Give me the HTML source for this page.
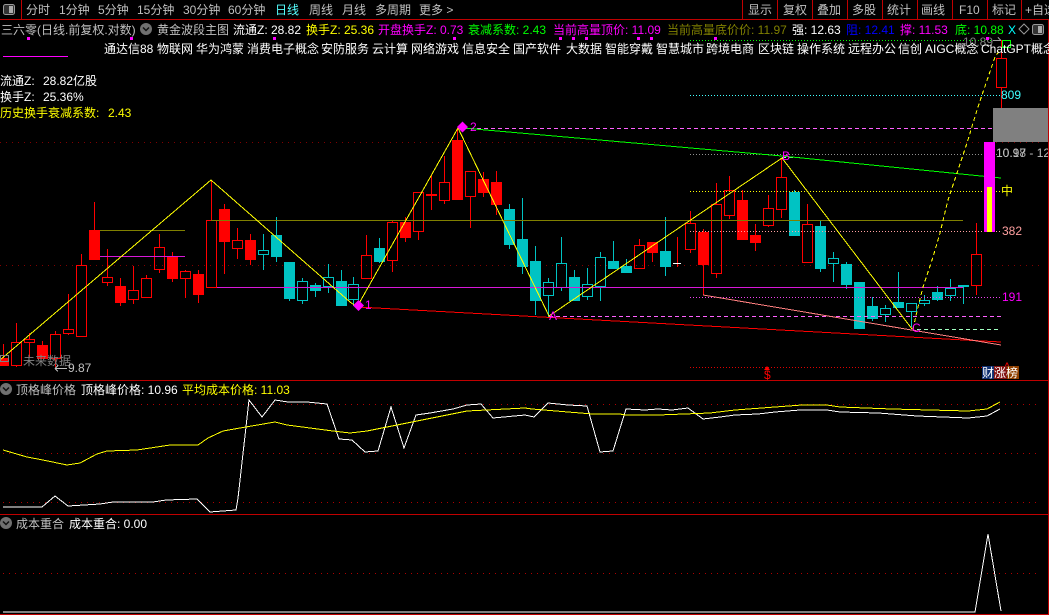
<!DOCTYPE html>
<html><head><meta charset="utf-8"><style>
html,body{margin:0;padding:0;background:#000;width:1049px;height:615px;overflow:hidden}
svg{display:block;position:absolute;left:0;top:0}
text{font-family:"Liberation Sans","WenQuanYi Zen Hei","Noto Sans CJK SC",sans-serif;font-size:12px;white-space:pre}
.g{fill:#c0c0c0}.w{fill:#fff}.y{fill:#ff0}.m{fill:#f0f}.l{fill:#0f0}.o{fill:#808000}.b{fill:#00f}.c{fill:#5ff}
.ln{shape-rendering:crispEdges;fill:none}
</style></head><body>
<svg width="1049" height="615" viewBox="0 0 1049 615">
<!-- grid -->
<g class="ln" stroke="#800000" stroke-dasharray="1 5">
<path d="M0 142.500H1040M0 265.500H1040"/>
<path d="M3 404.500H1040M3 453.500H1040M3 502.500H1040M3 573.500H1040" stroke="#b00000"/>
</g>
<!-- red wicks and hollow bodies -->
<path class="ln" stroke="#f00" d="M3.500 344V358M16.500 323V342M16.500 366V367M29.500 333V339M29.500 343V357M42.500 341V345M55.500 331V334M55.500 359V367M68.500 294V329M68.500 334V335M81.500 254V265M94.500 202V230M107.500 249V277M107.500 283V286M120.500 278V286M120.500 303V306M133.500 266V290M133.500 300V304M146.500 275V278M159.500 234V247M159.500 269V273M172.500 252V257M172.500 279V282M185.500 270V271M185.500 279V298M198.500 270V274M198.500 295V303M211.500 180V220M224.500 204V209M224.500 242V274M237.500 228V240M237.500 249V259M250.500 234V240M250.500 260V265M366.500 235V255M392.500 220V222M392.500 261V272M405.500 217V222M405.500 238V242M418.500 232V240M431.500 175V210M444.500 156V182M444.500 201V204M457.500 128V140M470.500 197V228M483.500 172V179M483.500 193V197M496.500 171V182M496.500 205V215M639.500 239V245M652.500 253V262M677.500 237V267M690.500 211V223M690.500 250V253M703.500 229V232M703.500 265V295M716.500 183V204M716.500 274V278M729.500 176V190M729.500 216V219M742.500 190V200M755.500 224V235M755.500 243V251M768.500 195V208M768.500 226V227M781.500 158V177M781.500 209V218M807.500 204V224M976.500 223V254M976.500 286V295M1001.500 40V58M1001.500 88V108
M11.500 342.500h10v23h-10zM24.500 339.500h10v3h-10zM50.500 334.500h10v24h-10zM63.500 329.500h10v4h-10zM76.500 265.500h10v71h-10zM102.500 277.500h10v5h-10zM128.500 290.500h10v9h-10zM141.500 278.500h10v19h-10zM154.500 247.500h10v22h-10zM180.500 271.500h10v7h-10zM206.500 220.500h10v67h-10zM232.500 240.500h10v8h-10zM361.500 255.500h10v23h-10zM387.500 222.500h10v38h-10zM413.500 192.500h10v39h-10zM439.500 182.500h10v18h-10zM465.500 171.500h10v25h-10zM634.500 245.500h10v23h-10zM685.500 223.500h10v26h-10zM711.500 204.500h10v69h-10zM724.500 190.500h10v25h-10zM763.500 208.500h10v17h-10zM776.500 177.500h10v32h-10zM802.500 224.500h10v38h-10zM971.500 254.500h10v31h-10zM996.500 58.500h10v29h-10z"/>
<!-- red filled -->
<path class="ln" style="fill:#f00" d="M-2 358h11v8h-11zM37 345h11v14h-11zM89 230h11v30h-11zM115 286h11v17h-11zM167 257h11v22h-11zM193 274h11v21h-11zM219 209h11v33h-11zM245 240h11v20h-11zM400 222h11v16h-11zM426 194h11v2h-11zM452 140h11v60h-11zM478 179h11v14h-11zM491 182h11v23h-11zM647 242h11v11h-11zM698 232h11v33h-11zM737 200h11v40h-11zM750 235h11v8h-11z"/>
<!-- cyan wicks and hollow bodies -->
<path class="ln" stroke="#00c3c3" d="M263.500 234V250M263.500 255V270M276.500 217V235M276.500 257V262M289.500 299V301M302.500 278V281M302.500 301V304M315.500 283V285M315.500 291V297M328.500 264V277M328.500 287V293M341.500 270V281M353.500 277V284M353.500 300V306M379.500 238V248M379.500 262V263M509.500 204V209M509.500 245V249M522.500 198V239M522.500 267V274M535.500 246V261M535.500 301V315M548.500 278V282M548.500 296V317M561.500 237V263M561.500 288V291M574.500 270V277M587.500 268V284M587.500 297V300M600.500 252V257M600.500 287V301M613.500 241V261M626.500 259V266M665.500 217V251M665.500 267V276M794.500 190V192M820.500 220V226M820.500 269V272M833.500 252V258M833.500 264V282M846.500 262V264M846.500 285V289M872.500 297V306M872.500 319V321M885.500 305V308M885.500 315V322M898.500 272V302M911.500 312V327M924.500 295V300M924.500 304V306M937.500 286V292M937.500 300V301M950.500 279V288M950.500 296V301M963.500 287V304
M258.500 250.500h10v4h-10zM297.500 281.500h10v19h-10zM323.500 277.500h10v9h-10zM348.500 284.500h10v15h-10zM543.500 282.500h10v13h-10zM556.500 263.500h10v24h-10zM582.500 284.500h10v12h-10zM595.500 257.500h10v29h-10zM828.500 258.500h10v5h-10zM880.500 308.500h10v6h-10zM906.500 303.500h10v8h-10zM919.500 300.500h10v3h-10zM945.500 288.500h10v7h-10z"/>
<!-- cyan filled -->
<path class="ln" style="fill:#00c3c3" d="M271 235h11v22h-11zM284 262h11v37h-11zM310 285h11v6h-11zM336 281h11v25h-11zM374 248h11v14h-11zM504 209h11v36h-11zM517 239h11v28h-11zM530 261h11v40h-11zM569 277h11v24h-11zM608 261h11v8h-11zM621 266h11v7h-11zM660 251h11v16h-11zM789 192h11v44h-11zM815 226h11v43h-11zM841 264h11v21h-11zM854 282h11v47h-11zM867 306h11v13h-11zM893 302h11v6h-11zM932 292h11v8h-11zM958 285h11v2h-11z"/>
<path class="ln" stroke="#fff" d="M673 263.500h8"/>
<!-- horizontal level lines -->
<path class="ln" stroke="#808000" d="M211 220.500H963M100 230.500H185"/>
<path class="ln" stroke="#d818d8" d="M217 287.500H963M100 256.500H185"/>
<g class="ln" stroke-dasharray="1 2">
<path stroke="#0f0" d="M690 40.500H1000"/>
<path stroke="#40ffff" d="M690 95.500H1001"/>
<path stroke="#909090" d="M690 154.500H1001"/>
<path stroke="#ff0" d="M690 191.500H1001"/>
<path stroke="#ffa0a0" d="M690 231.500H1001"/>
<path stroke="#f040f0" d="M690 297.500H1001"/>
<path stroke="#e00000" d="M690 367.500H1001"/>
</g>
<g class="ln" stroke-dasharray="4 3">
<path stroke="#ff60ff" d="M470 128.500H1000M549 316.500H1001"/>
<path stroke="#a0ffc0" d="M782 157.500H802M917 329.500H1001"/>
</g>
<!-- trend lines -->
<path class="ln" stroke="#0f0" d="M463 128L782 156L1001 178"/>
<path class="ln" stroke="#f00" d="M358 307L1001 342"/>
<path class="ln" stroke="#ff8080" d="M703 295L1001 345"/>
<path class="ln" stroke="#ff0" d="M0 360L211 180L350 302L357 307L458 128L549 316L782 158L912 329"/>
<path class="ln" stroke="#ff0" stroke-dasharray="4 3" d="M913 329L918 307L923 287L933 257L940 233L948 200L957 173L967 143L977 110L982 95L995 57L1000 50"/>
<!-- right side -->
<rect x="993" y="108" width="55" height="34" fill="#808080"/>
<rect x="984" y="142" width="11" height="90" fill="#f0f"/>
<rect x="987" y="187" width="5" height="45" fill="#ff0"/>
<path class="ln" stroke="#0f0" d="M1002.500 40.500h8v7h-8z"/>
<path class="ln" stroke="#a0a0a0" d="M993 40.500h8M998 37.500l3 3"/>
<text x="963" y="46" fill="#808080">10.89</text>
<text x="1001" y="99" fill="#40ffff">809</text>
<text x="996" y="157" fill="#a0a0a0">10.18</text>
<text x="996" y="157" fill="#c0c0c0">10.97 - 12</text>
<text x="1001" y="195" class="y">中</text>
<text x="1002" y="235" fill="#ffa0a0">382</text>
<text x="1002" y="301" class="m">191</text>
<!-- markers -->
<path fill="#f0f" d="M462.500 121.500l5.500 5.500-5.500 5.500-5.500-5.500zM358.500 300l5.500 5.500-5.500 5.500-5.500-5.500z"/>
<text x="470" y="131" class="m">2</text>
<text x="365" y="309" class="m">1</text>
<text x="549" y="320" class="m">A</text>
<text x="782" y="160" class="m">B</text>
<text x="912" y="332" class="m">C</text>
<text x="764" y="379" fill="#f00">$</text>
<text x="1003" y="371" fill="#e00000">A</text>
<path fill="#f00" d="M767 366l3 4h-6z"/>
<!-- badges -->
<rect x="982" y="366" width="12" height="13" fill="#103070"/>
<rect x="994" y="366" width="13" height="13" fill="#801010"/>
<rect x="1007" y="366" width="12" height="13" fill="#904000"/>
<text x="982" y="377" class="w">财涨榜</text>
<!-- bottom-left labels -->
<path class="ln" stroke="#808080" d="M0.500 355.500h8v6h-8z"/>
<text x="23" y="365" fill="#808080">未来数据</text>
<path class="ln" stroke="#c0c0c0" d="M55 368.500H67M55 368.500l3-3M55 368.500l3 3"/>
<text x="68" y="372" class="g">9.87</text>
<!-- sub panels -->
<polyline class="ln" stroke="#fff" points="3,507 22,507 42,507 55,496 68,506 100,504 113,502 153,502 166,500 197,499 210,512 236,510 238,498 249,400 262,417 275,400 288,402 307,402 327,404 339,439 352,440 365,452 378,451 391,407 404,448 416,415 430,413 453,409 467,405 481,404 493,418 525,415 534,417 548,403 568,405 587,406 600,452 613,451 626,409 645,410 658,409 672,410 688,408 703,419 720,417 735,415 758,414 775,412 800,410 827,410 840,412 878,413 917,416 943,417 968,418 987,416 1000,409"/>
<polyline class="ln" stroke="#ff0" points="3,450 27,457 43,460 67,465 80,463 97,454 107,451 137,450 170,445 198,445 208,438 223,431 240,428 275,422 287,425 333,431 350,433 367,431 417,421 467,411 525,408 532,409 568,412 593,414 620,414 625,415 658,415 710,413 735,410 775,407 802,405 827,405 840,407 892,409 968,411 987,409 1000,402"/>
<polyline class="ln" stroke="#fff" points="3,612 975,612 988,534 1001,611"/>
<!-- frame -->
<path class="ln" stroke="#c00000" d="M0 19.500H1049M21.500 0V19M742.500 0V19M777.500 0V19M812.500 0V19M847.500 0V19M882.500 0V19M917.500 0V19M952.500 0V19M987.500 0V19M1021.500 0V19M0 380.500H1049M0 514.500H1049M0 614.500H1049M1048.500 20V615"/>
<!-- toolbar -->
<rect x="3.500" y="4.500" width="11" height="10" rx="2" fill="#333" stroke="#999"/>
<rect x="9" y="6" width="4" height="7" fill="#aaa"/>
<g class="g">
<text x="26" y="14">分时</text><text x="59" y="14">1分钟</text><text x="98" y="14">5分钟</text><text x="137" y="14">15分钟</text><text x="183" y="14">30分钟</text><text x="228" y="14">60分钟</text>
<text x="275" y="14" class="c">日线</text>
<text x="309" y="14">周线</text><text x="342" y="14">月线</text><text x="375" y="14">多周期</text><text x="419" y="14">更多 &gt;</text>
<text x="748" y="14">显示</text><text x="783" y="14">复权</text><text x="817" y="14">叠加</text><text x="852" y="14">多股</text><text x="887" y="14">统计</text><text x="921" y="14">画线</text><text x="959" y="14">F10</text><text x="992" y="14">标记</text><text x="1025" y="14">+自选</text>
</g>
<!-- info row -->
<text x="1" y="34" class="g">三六零(日线.前复权.对数)</text>
<circle cx="146" cy="29" r="6" fill="#707070"/><path d="M143 27.500l3 3 3-3" fill="none" stroke="#111" stroke-width="1.500"/>
<text x="157" y="34" class="g">黄金波段主图</text>
<text x="233" y="34" class="w">流通Z: 28.82</text>
<text x="306" y="34" class="y">换手Z: 25.36</text>
<text x="378" y="34" class="m">开盘换手Z: 0.73</text>
<text x="468" y="34" class="l">衰减系数: 2.43</text>
<text x="553" y="34" class="m">当前高量顶价: 11.09</text>
<text x="667" y="34" class="o">当前高量底价价: 11.97</text>
<text x="792" y="34" class="w">强: 12.63</text>
<text x="846" y="34" class="b">阻: 12.41</text>
<text x="900" y="34" class="m">撑: 11.53</text>
<text x="955" y="34" class="l">底: 10.88</text>
<text x="1008" y="34" fill="#0ff">X</text>
<path d="M1024 24l5 5-5 5-5-5z" fill="none" stroke="#999"/>
<rect x="1032.500" y="24.500" width="11" height="10" rx="2" fill="#333" stroke="#999"/><rect x="1038" y="26" width="4" height="7" fill="#aaa"/>
<!-- magenta ticks -->
<path class="ln" style="fill:#f0f" d="M27 37h3v3h-3zM130 37h3v3h-3zM273 37h3v3h-3zM453 37h3v3h-3zM559 37h3v3h-3zM572 37h3v3h-3zM585 37h3v3h-3zM637 37h3v3h-3zM650 37h3v3h-3zM714 37h3v3h-3zM986 37h3v3h-3zM3 56h65v1h-65z"/>
<!-- concept row -->
<g class="w">
<text x="104" y="53">通达信88</text><text x="157" y="53">物联网</text><text x="196" y="53">华为鸿蒙</text><text x="247" y="53">消费电子概念</text><text x="321" y="53">安防服务</text><text x="372" y="53">云计算</text><text x="411" y="53">网络游戏</text><text x="462" y="53">信息安全</text><text x="513" y="53">国产软件</text><text x="566" y="53">大数据</text><text x="605" y="53">智能穿戴</text><text x="656" y="53">智慧城市</text><text x="706" y="53">跨境电商</text><text x="758" y="53">区块链</text><text x="797" y="53">操作系统</text><text x="848" y="53">远程办公</text><text x="898" y="53">信创</text><text x="925" y="53">AIGC概念</text><text x="981" y="53">ChatGPT概念</text>
<text x="0" y="85">流通Z:</text><text x="43" y="85">28.82亿股</text>
<text x="0" y="101">换手Z:</text><text x="43" y="101">25.36%</text>
</g>
<text x="0" y="117" class="y">历史换手衰减系数:</text><text x="108" y="117" class="y">2.43</text>
<!-- panel titles -->
<circle cx="6" cy="389" r="6" fill="#707070"/><path d="M3 387.500l3 3 3-3" fill="none" stroke="#111" stroke-width="1.500"/>
<text x="16" y="394" class="g">顶格峰价格</text>
<text x="81" y="394" class="w">顶格峰价格: 10.96</text>
<text x="182" y="394" class="y">平均成本价格: 11.03</text>
<circle cx="6" cy="523" r="6" fill="#707070"/><path d="M3 521.500l3 3 3-3" fill="none" stroke="#111" stroke-width="1.500"/>
<text x="16" y="528" class="g">成本重合</text>
<text x="69" y="528" class="w">成本重合: 0.00</text>
</svg>
</body></html>
